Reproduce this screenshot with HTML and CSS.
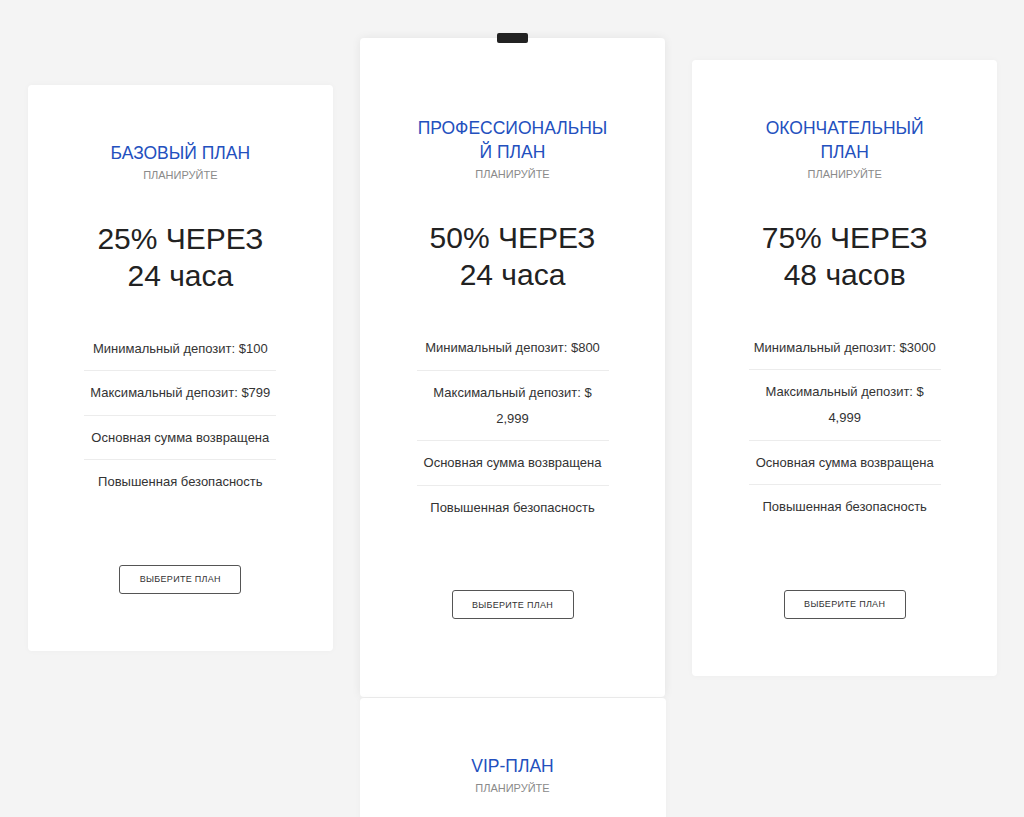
FILE: index.html
```html
<!DOCTYPE html>
<html lang="ru">
<head>
<meta charset="utf-8">
<title>Планы</title>
<link rel="stylesheet" href="styles.css">
</head>
<body>
<main class="plans">
  <div class="row">
    <section class="card">
      <h2 class="title">БАЗОВЫЙ ПЛАН</h2>
      <p class="sub">ПЛАНИРУЙТЕ</p>
      <p class="price">25% ЧЕРЕЗ<br>24 часа</p>
      <ul class="features">
        <li>Минимальный депозит: $100</li>
        <li>Максимальный депозит: $799</li>
        <li>Основная сумма возвращена</li>
        <li>Повышенная безопасность</li>
      </ul>
      <button class="btn">ВЫБЕРИТЕ ПЛАН</button>
    </section>
    <section class="card featured">
      <span class="tab"></span>
      <h2 class="title">ПРОФЕССИОНАЛЬНЫ<br>Й ПЛАН</h2>
      <p class="sub">ПЛАНИРУЙТЕ</p>
      <p class="price">50% ЧЕРЕЗ<br>24 часа</p>
      <ul class="features">
        <li>Минимальный депозит: $800</li>
        <li>Максимальный депозит: $<br>2,999</li>
        <li>Основная сумма возвращена</li>
        <li>Повышенная безопасность</li>
      </ul>
      <button class="btn">ВЫБЕРИТЕ ПЛАН</button>
    </section>
    <section class="card">
      <h2 class="title">ОКОНЧАТЕЛЬНЫЙ<br>ПЛАН</h2>
      <p class="sub">ПЛАНИРУЙТЕ</p>
      <p class="price">75% ЧЕРЕЗ<br>48 часов</p>
      <ul class="features">
        <li>Минимальный депозит: $3000</li>
        <li>Максимальный депозит: $<br>4,999</li>
        <li>Основная сумма возвращена</li>
        <li>Повышенная безопасность</li>
      </ul>
      <button class="btn">ВЫБЕРИТЕ ПЛАН</button>
    </section>
  </div>
  <div class="row row-second">
    <section class="card card-cut">
      <h2 class="title">VIP-ПЛАН</h2>
      <p class="sub">ПЛАНИРУЙТЕ</p>
    </section>
  </div>
</main>
</body>
</html>
```
FILE: styles.css
```css
html {
  overflow: hidden;
}
body {
  margin: 0;
  background: #f4f4f4;
  font-family: "Liberation Sans", Arial, sans-serif;
  color: #222;
}
.plans {
  width: 969px;
  padding: 38px 0 0 28px;
}
.row {
  display: flex;
  align-items: center;
  gap: 27px;
}
.row-second {
  justify-content: center;
  margin-top: 1px;
}
.card {
  position: relative;
  width: 305px;
  box-sizing: border-box;
  background: #fff;
  border-radius: 4px;
  padding: 56px 56px 57px;
  display: flex;
  flex-direction: column;
  align-items: center;
  text-align: center;
  box-shadow: 0 0 6px rgba(0, 0, 0, 0.03);
}
.featured {
  width: 306px;
  padding-top: 78px;
  padding-bottom: 78px;
  box-shadow: 0 0 10px rgba(0, 0, 0, 0.07);
}
.card-cut {
  width: 306px;
  padding-bottom: 200px;
}
.tab {
  position: absolute;
  top: -5px;
  left: 50%;
  margin-left: -15.5px;
  width: 31px;
  height: 10px;
  border-radius: 2px;
  background: #222;
}
.title {
  margin: 0;
  font-size: 17.5px;
  line-height: 24px;
  font-weight: normal;
  color: #2350be;
}
.sub {
  margin: 2px 0 0;
  font-size: 11px;
  line-height: 16px;
  color: #8a8a8a;
}
.price {
  margin: 37px 0 0;
  font-size: 30px;
  line-height: 37px;
  color: #222;
}
.features {
  list-style: none;
  margin: 33px 0 0;
  padding: 0;
  width: 192px;
}
.features li {
  font-size: 13px;
  line-height: 26px;
  color: #333;
  padding: 9px 0 8.5px;
  border-bottom: 1px solid #ececec;
}
.features li:last-child {
  border-bottom: none;
}
.btn {
  margin-top: 61px;
  width: 122px;
  height: 29px;
  box-sizing: border-box;
  background: #fff;
  border: 1px solid #555;
  border-radius: 3px;
  font-family: "Liberation Sans", Arial, sans-serif;
  font-size: 9px;
  letter-spacing: 0.3px;
  color: #333;
  padding: 0;
}
```
